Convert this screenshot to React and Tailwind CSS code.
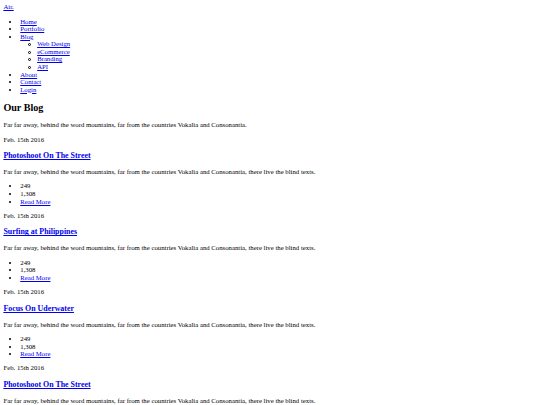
import React from "react";

const posts = [
  "Photoshoot On The Street",
  "Surfing at Philippines",
  "Focus On Uderwater",
  "Photoshoot On The Street",
  "Surfing at Philippines",
];

const text =
  "Far far away, behind the word mountains, far from the countries Vokalia and Consonantia, there live the blind texts.";

function A({ children }) {
  return (
    <a href="#" className="text-[#0000ee] underline">
      {children}
    </a>
  );
}

function Sub({ children }) {
  return (
    <li>
      <span className="inline-block w-[3px] h-[3px] rounded-full border-[0.8px] border-black ml-[-9px] mr-[6px] align-middle" />
      {children}
    </li>
  );
}

export default function App() {
  return (
    <div className="w-[540px] bg-white text-black font-['Liberation_Serif',serif] text-[6.75px] leading-[1.12]">
      <div className="p-[3.375px]">
        <A>Air.</A>
        <ul className="list-disc pl-[16.875px] my-[6.75px]">
          <li><A>Home</A></li>
          <li><A>Portfolio</A></li>
          <li>
            <A>Blog</A>
            <ul className="list-none pl-[16.875px]">
              <Sub><A>Web Design</A></Sub>
              <Sub><A>eCommerce</A></Sub>
              <Sub><A>Branding</A></Sub>
              <Sub><A>API</A></Sub>
            </ul>
          </li>
          <li><A>About</A></li>
          <li><A>Contact</A></li>
          <li><A>Login</A></li>
        </ul>
        <h2 className="text-[10.125px] font-bold my-[8.4px]">Our Blog</h2>
        <p className="my-[6.75px]">
          Far far away, behind the word mountains, far from the countries Vokalia and Consonantia.
        </p>
        {posts.map((t, i) => (
          <div key={i}>
            <p className="my-[6.75px]">Feb. 15th 2016</p>
            <h3 className="text-[7.9px] font-bold mt-[9px] mb-[7.2px]">
              <A>{t}</A>
            </h3>
            <p className="my-[6.75px]">{text}</p>
            <ul className="list-disc pl-[16.875px] my-[6.75px]">
              <li>249</li>
              <li>1,308</li>
              <li><A>Read More</A></li>
            </ul>
          </div>
        ))}
      </div>
    </div>
  );
}
